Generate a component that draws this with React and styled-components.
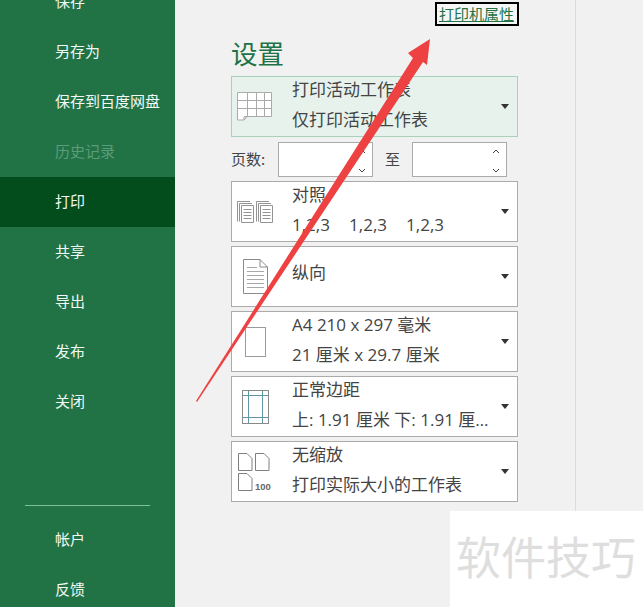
import React from 'react'
import styled, { createGlobalStyle } from 'styled-components'

const GlobalStyle = createGlobalStyle`
    html, body {
        margin: 0;
        padding: 0;
        background: #f1f1f1;
    }
    body {
        font-family: "Noto Sans CJK SC", "Liberation Sans", sans-serif;
    }
`

const Page = styled.div`
    position: relative;
    display: flex;
    width: 643px;
    height: 607px;
    overflow: hidden;
    background: #f1f1f1;
`

const Sidebar = styled.nav`
    flex: none;
    display: flex;
    flex-direction: column;
    width: 175px;
    height: 640px;
    margin-top: -23px;
    background: #217346;
`

const MenuItem = styled.div`
    flex: none;
    height: 50px;
    padding-left: 55px;
    font-size: 15px;
    line-height: 48px;
    color: ${(p) => (p.$disabled ? '#5c9c7a' : '#f2f8f4')};
    background: ${(p) => (p.$active ? '#034c1c' : 'transparent')};
`

const MenuRule = styled.div`
    flex: none;
    height: 1px;
    margin: 78px 25px 9px;
    background: #7fbf9c;
`

const Main = styled.main`
    flex: none;
    width: 400px;
    height: 512px;
`

const Column = styled.div`
    display: flex;
    flex-direction: column;
    width: 287px;
    margin-left: 56px;
`

const PrinterLink = styled.a`
    align-self: flex-end;
    margin: 2px -1px 0 0;
    padding: 0 3px 0 2px;
    height: 20px;
    border: 2px solid #000;
    background: #f6f6f6;
    font-size: 15px;
    line-height: 19px;
    color: #217346;
    text-decoration: underline;
`

const Heading = styled.h2`
    margin: 9px 0 0;
    height: 41px;
    font-size: 26.5px;
    font-weight: 400;
    line-height: 36px;
    color: #217346;
`

const Card = styled.div`
    flex: none;
    display: flex;
    align-items: center;
    box-sizing: border-box;
    height: 61px;
    margin-bottom: 4px;
    border: 1px solid ${(p) => (p.$selected ? '#a9d0b9' : '#ababab')};
    background: ${(p) => (p.$selected ? '#e7f2ec' : '#fff')};
`

const IconSlot = styled.div`
    flex: none;
    display: flex;
    align-items: center;
    justify-content: center;
    width: 46px;
    height: 100%;
    margin: 0 14px 0 0;
`

const CardText = styled.div`
    flex: 1;
    min-width: 0;
    padding-bottom: ${(p) => (p.$single ? 7 : 4)}px;
    font-family: "Open Sans", "Noto Sans CJK SC", sans-serif;
    font-size: 17px;
    line-height: 30px;
    color: #444;
`

const Line = styled.div`
    white-space: pre;
    overflow: hidden;
    text-overflow: ellipsis;
    word-spacing: ${(p) => (p.$tight ? '-0.6px' : 'normal')};
`

const Caret = styled.span`
    flex: none;
    width: 0;
    height: 0;
    margin: 0 8px 0 8px;
    border-left: 4px solid transparent;
    border-right: 4px solid transparent;
    border-top: 5px solid #333;
`

const PageRange = styled.div`
    flex: none;
    display: flex;
    align-items: center;
    height: 35px;
    margin: 1px 0 4px;
    font-size: 15px;
    color: #444;
`

const RangeLabel = styled.span`
    flex: none;
    width: ${(p) => p.$width}px;
    padding-bottom: 2px;
`

const Spinner = styled.div`
    position: relative;
    box-sizing: border-box;
    width: 95px;
    height: 35px;
    margin-right: ${(p) => p.$gap || 0}px;
    border: 1px solid #ababab;
    background: #fff;
`

const SpinIcons = styled.svg`
    position: absolute;
    top: 5px;
    right: 5px;
`

const Divider = styled.div`
    flex: none;
    width: 1px;
    height: 512px;
    background: #dcdcdc;
`

const PageSetupLink = styled.a`
    align-self: flex-end;
    margin: 3px 5px 0 0;
    font-size: 15px;
    line-height: 20px;
    color: #217346;
    text-decoration: underline;
`

const Watermark = styled.div`
    position: absolute;
    left: 450px;
    top: 511px;
    width: 193px;
    height: 96px;
    padding-left: 6px;
    box-sizing: border-box;
    background: #fff;
    font-size: 45px;
    line-height: 90px;
    color: #dedede;
    white-space: nowrap;
`

const Arrow = styled.svg`
    position: absolute;
    left: 0;
    top: 0;
    pointer-events: none;
`

const SheetIcon = () => (
    <svg width="36" height="30" viewBox="0 0 36 30" fill="none" stroke="#aaaaaa">
        <path d="M.5 .5H34.5V24.5H10L7 28H.5Z" fill="#fff" />
        <path d="M.5 8.5H34.5M.5 16.5H34.5M10.5 .5V24M19.5 .5V24.5M27.5 .5V24.5" />
        <path d="M7 28L10 24.5H7Z" />
    </svg>
)

const CollateSheet = ({ x }) => (
    <g transform={`translate(${x} 0)`}>
        <path d="M.5 20.5V.5H13M2.5 20.5V2.5H15" />
        <path d="M4.5 4.5H16.5V21.5H4.5Z" fill="#fff" />
        <path d="M6.5 8.5H14.5M6.5 11.5H14.5M6.5 14.5H14.5M6.5 17.5H14.5" />
    </g>
)

const CollateIcon = () => (
    <svg width="37" height="22" viewBox="0 0 37 22" fill="none" stroke="#939393">
        <CollateSheet x={0} />
        <CollateSheet x={19} />
    </svg>
)

const PortraitIcon = () => (
    <svg width="25" height="35" viewBox="0 0 25 35" fill="#fff" stroke="#8a8a8a">
        <path d="M.5 .5H17L24.5 8V34.5H.5Z" />
        <path d="M17 .5V8H24.5" fill="none" />
        <path d="M4 8.5H14M4 12.5H21M4 16.5H21M4 20.5H21M4 24.5H21M4 28.5H21" stroke="#a8a8a8" fill="none" />
    </svg>
)

const PaperIcon = () => (
    <svg width="21" height="30" viewBox="0 0 21 30" fill="#fff" stroke="#9a9a9a">
        <rect x=".5" y=".5" width="20" height="29" />
    </svg>
)

const MarginIcon = () => (
    <svg width="27" height="34" viewBox="0 0 27 34" fill="#fff">
        <rect x=".5" y=".5" width="26" height="33" stroke="#8a8a8a" />
        <path d="M6.5 1V33M20.5 1V33M1 5.5H26M1 27.5H26" fill="none" stroke="#5e96a5" />
    </svg>
)

const ScaleIcon = () => (
    <svg width="34" height="38" viewBox="0 0 34 38" fill="#fff" stroke="#808080" strokeWidth="1">
        <path d="M.5 .5H9L14 5.5V17.5H.5Z" />
        <path d="M17.5 .5H26L31 5.5V17.5H17.5Z" />
        <path d="M.5 20.5H9L14 25.5V37.5H.5Z" />
        <text x="17" y="37" fontSize="9.5" fontWeight="700" fill="#666" stroke="none" fontFamily="Liberation Sans, sans-serif">100</text>
    </svg>
)

const settings = [
    { icon: <SheetIcon />, lines: ['打印活动工作表', '仅打印活动工作表'], selected: true },
    'range',
    { icon: <CollateIcon />, lines: ['对照', '1,2,3     1,2,3     1,2,3'], tight: true },
    { icon: <PortraitIcon />, lines: ['纵向'] },
    { icon: <PaperIcon />, lines: ['A4 210 x 297 毫米', '21 厘米 x 29.7 厘米'] },
    { icon: <MarginIcon />, lines: ['正常边距', '上: 1.91 厘米 下: 1.91 厘米 左: 1.78 厘米'] },
    { icon: <ScaleIcon />, lines: ['无缩放', '打印实际大小的工作表'] },
]

const topItems = ['保存', '另存为', '保存到百度网盘', '历史记录', '打印', '共享', '导出', '发布', '关闭']

function SpinBox({ gap }) {
    return (
        <Spinner $gap={gap}>
            <SpinIcons width="10" height="26" viewBox="0 0 10 26" fill="none" stroke="#444">
                <path d="M2 5L5 2L8 5M2 21L5 24L8 21" />
            </SpinIcons>
        </Spinner>
    )
}

function App() {
    return (
        <Page>
            <GlobalStyle />
            <Sidebar>
                {topItems.map((item) => (
                    <MenuItem key={item} $active={item === '打印'} $disabled={item === '历史记录'}>
                        {item}
                    </MenuItem>
                ))}
                <MenuRule />
                <MenuItem>帐户</MenuItem>
                <MenuItem>反馈</MenuItem>
            </Sidebar>
            <Main>
                <Column>
                    <PrinterLink>打印机属性</PrinterLink>
                    <Heading>设置</Heading>
                    {settings.map((row, i) =>
                        row === 'range' ? (
                            <PageRange key={i}>
                                <RangeLabel $width={47}>页数:</RangeLabel>
                                <SpinBox gap={12} />
                                <RangeLabel $width={27}>至</RangeLabel>
                                <SpinBox />
                            </PageRange>
                        ) : (
                            <Card key={i} $selected={row.selected}>
                                <IconSlot>{row.icon}</IconSlot>
                                <CardText $single={row.lines.length === 1}>
                                    {row.lines.map((line) => (
                                        <Line key={line} $tight={row.tight}>{line}</Line>
                                    ))}
                                </CardText>
                                <Caret />
                            </Card>
                        )
                    )}
                    <PageSetupLink>页面设置</PageSetupLink>
                </Column>
            </Main>
            <Divider />
            <Watermark>软件技巧</Watermark>
            <Arrow width="643" height="607" viewBox="0 0 643 607">
                <path d="M196 401L413 58L408 53L430 39L427 65L423 62L197 402Z" fill="#ee4242" />
            </Arrow>
        </Page>
    )
}

export default App
